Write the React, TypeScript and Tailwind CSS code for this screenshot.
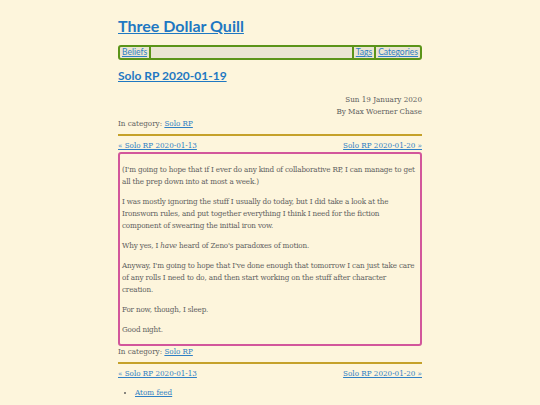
const link = 'text-[#2f7fc4] underline';
const sans = { fontFamily: 'Lato, "Open Sans", sans-serif' };

const PrevNext = ({ className = '' }: { className?: string }) => (
  <div className={`flex justify-between text-[8px] leading-[12px] ${className}`}>
    <a href="#" className={link}>« Solo RP 2020-01-13</a>
    <a href="#" className={link}>Solo RP 2020-01-20 »</a>
  </div>
);

const paragraphs = [
  <>(I'm going to hope that if I ever do any kind of collaborative RP, I can manage to get all the prep down into at most a week.)</>,
  <>I was mostly ignoring the stuff I usually do today, but I did take a look at the Ironsworn rules, and put together everything I think I need for the fiction component of swearing the initial iron vow.</>,
  <>Why yes, I <em>have</em> heard of Zeno's paradoxes of motion.</>,
  <>Anyway, I'm going to hope that I've done enough that tomorrow I can just take care of any rolls I need to do, and then start working on the stuff after character creation.</>,
  <>For now, though, I sleep.</>,
  <>Good night.</>,
];

export default function App() {
  return (
    <div className="min-h-[405px] bg-[#fdf5dc] text-[#606060] font-stretch-condensed" style={{ fontFamily: '"DejaVu Serif", serif' }}>
      <div className="w-[304px] mx-auto pt-[14px]">
        <h1 className="text-[16px] leading-[24px] font-bold" style={sans}>
          <a href="#" className="text-[#1f78c2] underline">Three Dollar Quill</a>
        </h1>
        <nav
          className="mt-[7px] flex items-stretch h-[15px] border-[2px] border-[#5b9419] rounded-[3px] bg-[#ebe5d2] text-[8.5px] leading-[11px]"
          style={sans}
        >
          <a href="#" className={`${link} px-[2px] border-r-[2px] border-[#5b9419]`}>Beliefs</a>
          <div className="flex-1" />
          <a href="#" className={`${link} px-[2px] border-l-[2px] border-[#5b9419]`}>Tags</a>
          <a href="#" className={`${link} px-[2px] border-l-[2px] border-[#5b9419]`}>Categories</a>
        </nav>
        <h2 className="mt-[8px] text-[12px] leading-[16px] font-bold" style={sans}>
          <a href="#" className="text-[#1f78c2] underline">Solo RP 2020-01-19</a>
        </h2>
        <div className="mt-[10px] text-right text-[8px] leading-[12px]">
          <div>Sun 19 January 2020</div>
          <div>By Max Woerner Chase</div>
        </div>
        <div className="text-[8px] leading-[12px]">
          In category: <a href="#" className={link}>Solo RP</a>
        </div>
        <hr className="border-0 h-[2px] bg-[#c5a12a] mt-[4px]" />
        <PrevNext className="mt-[4px]" />
        <article className="border-[2px] border-[#d2569b] rounded-[3px] px-[2px] pt-[10px] pb-[8px] text-[8px] leading-[12px] tracking-[-0.16px]">
          {paragraphs.map((p, i) => (
            <p key={i} className={i < paragraphs.length - 1 ? 'mb-[8px]' : ''}>{p}</p>
          ))}
        </article>
        <div className="text-[8px] leading-[12px]">
          In category: <a href="#" className={link}>Solo RP</a>
        </div>
        <hr className="border-0 h-[2px] bg-[#c5a12a] mt-[4px]" />
        <PrevNext className="mt-[4px]" />
        <ul className="mt-[7px] pl-[17px] list-disc text-[8px] leading-[12px]">
          <li><a href="#" className={link}>Atom feed</a></li>
        </ul>
      </div>
    </div>
  );
}
